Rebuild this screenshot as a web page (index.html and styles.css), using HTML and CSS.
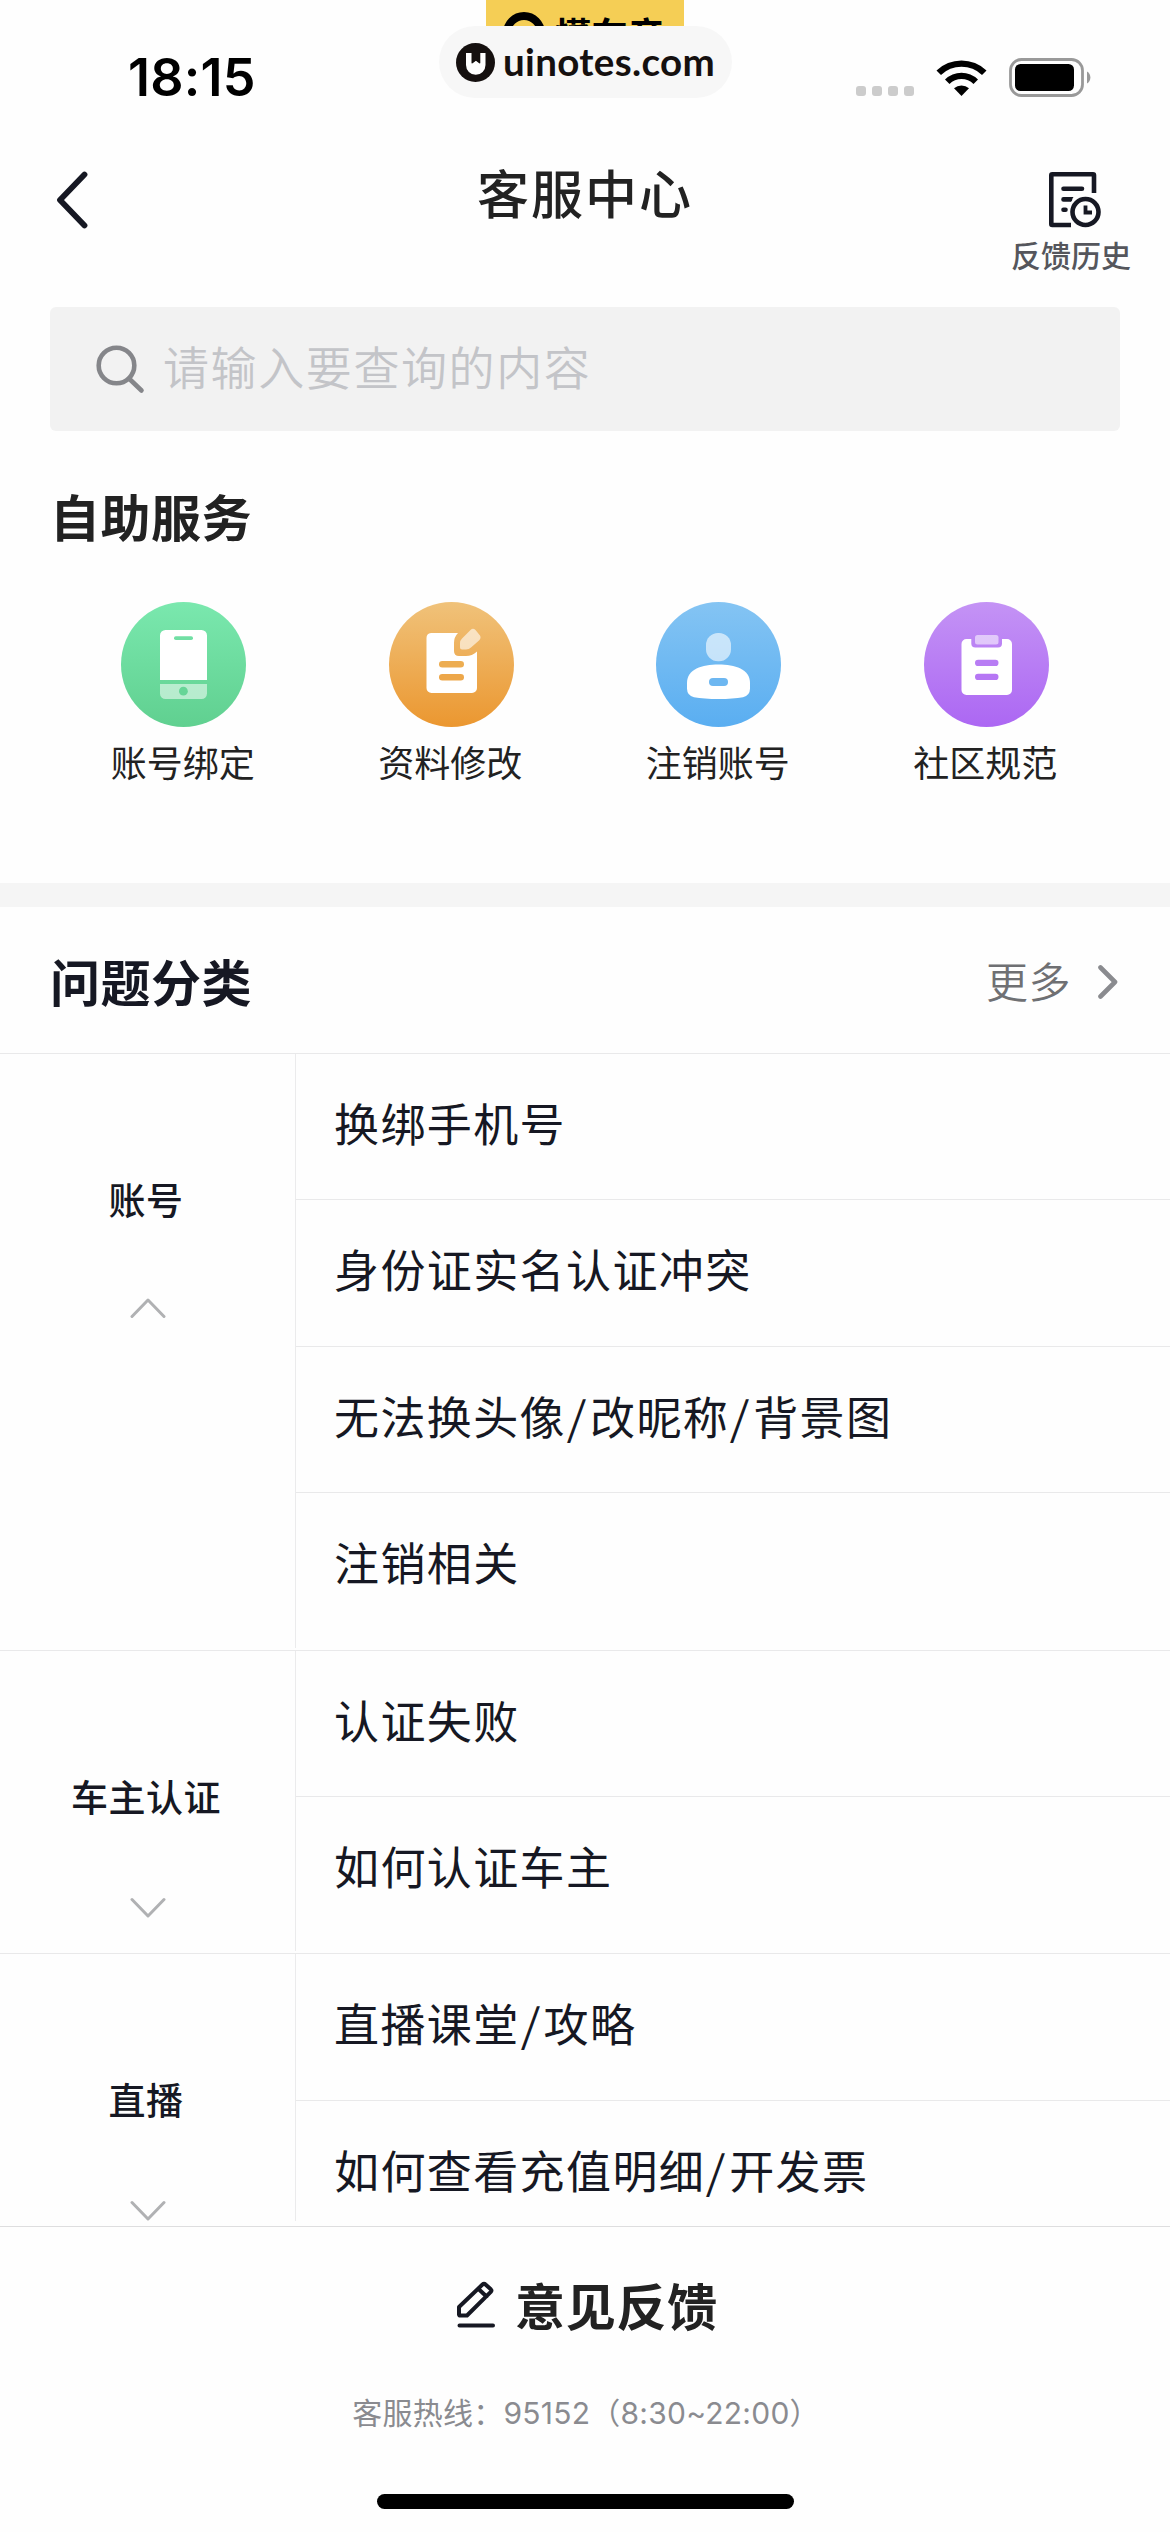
FILE: index.html
```html
<!DOCTYPE html>
<html lang="zh-CN">
<head>
<meta charset="utf-8">
<title>客服中心</title>
<link rel="stylesheet" href="styles.css">
</head>
<body>
<div class="screen">
  <div class="status">
    <span class="time">18:15</span>
    <div class="signals">
      <span class="dots"><i></i><i></i><i></i><i></i></span>
      <svg class="wifi" width="51" height="37" viewBox="0 0 51 37">
        <path d="M0.500 11.500A36 36 0 0 1 50.500 11.500L46 16A29.500 29.500 0 0 0 5 16Z"/>
        <path d="M9 20.500A23.500 23.500 0 0 1 42 20.500L37.500 25A17 17 0 0 0 13.500 25Z"/>
        <path d="M18 29.300A11.500 11.500 0 0 1 33 29.300L25.500 37Z"/>
      </svg>
      <svg class="battery" width="82" height="39" viewBox="0 0 82 39">
        <rect x="1.500" y="1.500" width="72" height="36" rx="11" fill="none" stroke="#999" stroke-width="2.800"/>
        <rect x="6" y="6" width="59" height="27" rx="5.500" fill="#000"/>
        <path d="M78 13.500a7 7 0 0 1 0 12z" fill="#999"/>
      </svg>
    </div>
    <div class="brand">
      <svg width="42" height="42" viewBox="0 0 42 42"><circle cx="21" cy="21" r="17" fill="none" stroke="#000" stroke-width="8"/></svg>
      <span>懂车帝</span>
    </div>
    <div class="pill">
      <svg width="39" height="39" viewBox="0 0 39 39">
        <circle cx="19.500" cy="19.500" r="19.500" fill="#15100f"/>
        <path d="M10 10h5.500v10c0 .5.500.7 1 .3l3.400-2.600 3.400 2.600c.5.400 1 .2 1-.3V10H29.500v12a9.700 9.700 0 0 1-19.500 0z" fill="#fff"/>
        <path d="M16.500 9h7v11l-3.500-3-3.500 3z" fill="#15100f"/>
      </svg>
      <span>uinotes.com</span>
    </div>
  </div>

  <header class="header">
    <svg class="back" width="34" height="60" viewBox="0 0 34 60"><path d="M30.500 4.500L6 30l24.500 25.500" fill="none" stroke="#161823" stroke-width="5.800" stroke-linecap="round" stroke-linejoin="round"/></svg>
    <h1 class="title">客服中心</h1>
    <div class="history">
      <svg width="54" height="56" viewBox="0 0 54 56" fill="none" stroke="#161823" stroke-width="4.600" stroke-linecap="round" stroke-linejoin="round">
        <path d="M45 21V3.300Q45 2.300 44 2.300H3.300Q2.300 2.300 2.300 3.300V52Q2.300 53 3.300 53H22" stroke-linecap="butt"/>
        <path d="M14.500 16.800H33M14.500 27.400H21M14.500 37.800H16.500"/>
        <path d="M21 25.100h3.500l-3 4.600H21z" fill="#161823" stroke="none"/>
        <circle cx="36.500" cy="40" r="13"/>
        <path d="M36.500 33.500V40.500H43" stroke-width="3.800" stroke-linecap="butt" stroke-linejoin="miter"/>
      </svg>
      <span>反馈历史</span>
    </div>
  </header>

  <div class="search">
    <svg width="50" height="49" viewBox="0 0 50 49" fill="none" stroke="#85868a" stroke-linecap="round"><circle cx="20.500" cy="20.500" r="17.800" stroke-width="4.600"/><path d="M33 33.500L45.500 45.500" stroke-width="4.600"/></svg>
    <span>请输入要查询的内容</span>
  </div>

  <section class="self">
    <h2>自助服务</h2>
    <div class="tiles">
      <div class="tile">
        <svg width="125" height="125" viewBox="0 0 125 125">
          <defs><linearGradient id="g1" x2="0" y2="1"><stop stop-color="#7ae8ae"/><stop offset="1" stop-color="#60d090"/></linearGradient></defs>
          <circle cx="62.500" cy="62.500" r="62.500" fill="url(#g1)"/>
          <path d="M39 78V33.500a5.500 5.500 0 0 1 5.500-5.500h36a5.500 5.500 0 0 1 5.500 5.500V78z" fill="#fff"/>
          <rect x="53" y="34.300" width="19" height="3.700" rx="1.800" fill="#71dfa4"/>
          <path d="M39 82H86V91.500a5.500 5.500 0 0 1-5.500 5.500h-36a5.500 5.500 0 0 1-5.500-5.500z" fill="#fff" opacity=".53"/>
          <circle cx="62.400" cy="89.200" r="4.400" fill="#66d597"/>
        </svg>
        <span>账号绑定</span>
      </div>
      <div class="tile">
        <svg width="125" height="125" viewBox="0 0 125 125">
          <defs><linearGradient id="g2" x2="0" y2="1"><stop stop-color="#f0c27a"/><stop offset="1" stop-color="#eb9730"/></linearGradient></defs>
          <circle cx="62.500" cy="62.500" r="62.500" fill="url(#g2)"/>
          <path d="M42 31H69Q65 35 65 41V49Q65 54 70 54H77Q83 54 88 49.500V86a5 5 0 0 1-5 5H42.500a5 5 0 0 1-5-5V36a5 5 0 0 1 4.500-5z" fill="#fff"/>
          <path d="M81.500 28Q84 25.500 86.500 28L91 33.500Q92.500 36 90 38.500L82 45.500Q80 47.500 77 47.500H73Q71 47.500 71 45.500V41Q71 38.500 73 36.500z" fill="#fff" opacity=".6"/>
          <rect x="50" y="59" width="25" height="6.600" rx="3.300" fill="#edad51"/>
          <rect x="50" y="72" width="25" height="6.600" rx="3.300" fill="#eda74a"/>
        </svg>
        <span>资料修改</span>
      </div>
      <div class="tile">
        <svg width="125" height="125" viewBox="0 0 125 125">
          <defs><linearGradient id="g3" x2="0" y2="1"><stop stop-color="#84c4f3"/><stop offset="1" stop-color="#5aaef1"/></linearGradient></defs>
          <circle cx="62.500" cy="62.500" r="62.500" fill="url(#g3)"/>
          <rect x="50" y="31" width="25" height="28.300" rx="12" fill="#fff" opacity=".6"/>
          <path d="M62.500 62.500C79 62.500 94 67 94 81V86.500Q94 93.500 87 95.200Q77 97 62.500 97T38 95.200Q31 93.500 31 86.500V81C31 67 46 62.500 62.500 62.500z" fill="#fff"/>
          <rect x="53" y="76" width="19" height="8" rx="4" fill="#6db7f1"/>
        </svg>
        <span>注销账号</span>
      </div>
      <div class="tile">
        <svg width="125" height="125" viewBox="0 0 125 125">
          <defs><linearGradient id="g4" x2="0" y2="1"><stop stop-color="#c493f5"/><stop offset="1" stop-color="#ac67f3"/></linearGradient></defs>
          <circle cx="62.500" cy="62.500" r="62.500" fill="url(#g4)"/>
          <path d="M42.500 37H47.300V41.500a4 4 0 0 0 4 4H74a4 4 0 0 0 4-4V37H83a5 5 0 0 1 5 5V88a5 5 0 0 1-5 5H42.500a5 5 0 0 1-5-5V42a5 5 0 0 1 5-5z" fill="#fff"/>
          <rect x="51" y="33" width="23.500" height="9.500" rx="2.500" fill="#fff" opacity=".55"/>
          <rect x="51" y="57.700" width="23.500" height="6.300" rx="3.100" fill="#b87df4"/>
          <rect x="51" y="71.700" width="23.500" height="6.300" rx="3.100" fill="#b677f4"/>
        </svg>
        <span>社区规范</span>
      </div>
    </div>
  </section>

  <div class="band"></div>

  <section class="faq">
    <div class="faq-head">
      <h2>问题分类</h2>
      <div class="more"><span>更多</span><svg width="20" height="34" viewBox="0 0 20 34"><path d="M2.500 2.500L17 17L2.500 31.500" fill="none" stroke="#8a8b8f" stroke-width="4.600" stroke-linecap="round" stroke-linejoin="round"/></svg></div>
    </div>

    <div class="group">
      <div class="cat"><span>账号</span><svg class="up" width="36" height="22" viewBox="0 0 36 22"><path d="M2 19.500L18 3L34 19.500"/></svg></div>
      <ul>
        <li>换绑手机号</li>
        <li>身份证实名认证冲突</li>
        <li>无法换头像<b>/</b>改昵称<b>/</b>背景图</li>
        <li>注销相关</li>
      </ul>
    </div>
    <div class="group">
      <div class="cat"><span>车主认证</span><svg width="36" height="22" viewBox="0 0 36 22"><path d="M2 2.500L18 19L34 2.500"/></svg></div>
      <ul>
        <li>认证失败</li>
        <li>如何认证车主</li>
      </ul>
    </div>
    <div class="group last">
      <div class="cat"><span>直播</span><svg width="36" height="22" viewBox="0 0 36 22"><path d="M2 2.500L18 19L34 2.500"/></svg></div>
      <ul>
        <li>直播课堂<b>/</b>攻略</li>
        <li>如何查看充值明细<b>/</b>开发票</li>
      </ul>
    </div>
  </section>

  <footer class="footer">
    <div class="feedback">
      <svg width="38" height="47" viewBox="0 0 38 47" fill="none" stroke="#161823" stroke-width="4" stroke-linecap="round" stroke-linejoin="round"><path d="M2 33.500V26L25.500 3.500Q27 2 28.500 3.500L33.800 8.300Q35 9.500 33.800 10.800L10 34.500H2.500zM21.500 8L29.500 15.500M2.500 44.500H36"/></svg>
      <span>意见反馈</span>
    </div>
    <p class="hotline">客服热线：<span>95152</span>（<span>8:30~22:00</span>）</p>
    <div class="home"></div>
  </footer>
</div>
</body>
</html>
```
FILE: styles.css
```css
* { box-sizing: border-box; margin: 0; padding: 0; }

body {
  width: 1170px;
  background: #fefefe;
  color: #161823;
  font-family: "Noto Sans CJK SC", sans-serif;
}

svg { display: block; flex: none; }

.screen {
  width: 1170px;
  height: 2532px;
  display: flex;
  flex-direction: column;
  overflow: hidden;
}

/* Status bar */
.status {
  position: relative;
  height: 140px;
  flex: none;
  display: flex;
  justify-content: space-between;
  padding: 0 79px 0 128px;
}
.time {
  margin-top: 48px;
  font: 600 52px/60px Inter, sans-serif;
  color: #000;
  letter-spacing: 0.200px;
}
.signals { display: flex; height: 39px; margin-top: 58px; align-items: flex-start; }
.dots { display: flex; gap: 6px; margin: 28px 22px 0 0; }
.dots i { width: 10px; height: 10px; border-radius: 3px; background: #ccc; }
.wifi { margin: 1px 22px 0 0; }

.brand {
  position: absolute;
  left: 486px;
  top: 0;
  width: 198px;
  height: 40px;
  overflow: hidden;
  display: flex;
  gap: 9px;
  padding: 12px 0 0 17px;
  background: #f5ce55;
}
.brand span {
  font-size: 37px;
  line-height: 44px;
  font-weight: 700;
  color: #000;
}
.pill {
  position: absolute;
  left: 439px;
  top: 26px;
  width: 293px;
  height: 72px;
  border-radius: 36px;
  background: #f7f7f7;
  display: flex;
  align-items: center;
  gap: 8px;
  padding-left: 17px;
}
.pill span {
  margin-top: -2px;
  font: 700 38.500px/44px Lato, sans-serif;
  letter-spacing: 0.350px;
  color: #15100f;
}

/* Header */
.header {
  height: 167px;
  flex: none;
  display: grid;
  grid-template-columns: 200px 1fr 200px;
}
.back { margin: 29.500px 0 0 54px; }
.title {
  justify-self: center;
  margin-top: 22px;
  font-size: 52px;
  line-height: 60px;
  font-weight: 500;
  letter-spacing: 2px;
  color: #222;
}
.history {
  justify-self: end;
  width: 122px;
  margin: 32px 38px 0 0;
  display: flex;
  flex-direction: column;
  align-items: center;
}
.history svg { margin-left: 9px; }
.history span {
  margin-top: 8px;
  font-size: 30px;
  line-height: 36px;
  font-weight: 500;
  color: #55565c;
}

/* Search */
.search {
  height: 124px;
  flex: none;
  margin: 0 50px;
  padding-left: 46px;
  border-radius: 6px;
  background: #f2f2f2;
  display: flex;
  align-items: center;
  gap: 17px;
}
.search span {
  margin-top: -8px;
  font-size: 46px;
  line-height: 60px;
  font-weight: 350;
  letter-spacing: 1.600px;
  color: #c3c4c8;
}

h2 { font-size: 50px; line-height: 60px; font-weight: 700; letter-spacing: 0.500px; }

/* Self service */
.self { height: 452px; flex: none; padding: 54px 50px 0; }
.self h2 { color: #222; }
.tiles { display: grid; grid-template-columns: repeat(4, 1fr); margin-top: 57px; }
.tile { display: flex; flex-direction: column; align-items: center; }
.tile span { margin: 14px 2px 0 0; font-size: 36px; line-height: 40px; color: #222; }

.band { height: 24px; flex: none; background: #f5f5f5; }

/* Questions */
.faq { height: 1319px; flex: none; overflow: hidden; }
.faq-head {
  height: 146px;
  padding: 0 52px 0 50px;
  display: flex;
  justify-content: space-between;
}
.faq-head h2 { margin-top: 43px; }
.more { display: flex; align-items: flex-start; gap: 27px; }
.more span { margin-top: 43px; font-size: 42px; line-height: 60px; font-weight: 350; letter-spacing: 0.500px; color: #6f7073; }
.more svg { margin-top: 57.500px; }

.group {
  display: flex;
  border-top: 1px solid #e9e9ea;
  padding-bottom: 2px;
}
.cat {
  width: 296px;
  border-right: 1px solid #ebebec;
  display: flex;
  flex-direction: column;
  align-items: center;
}
.cat span { margin: 123px 3px 0 0; font-size: 37px; line-height: 44px; font-weight: 500; letter-spacing: 0.500px; }
.cat svg { margin-top: 79px; fill: none; stroke: #b0b1b3; stroke-width: 3; stroke-linecap: round; stroke-linejoin: round; }
.cat .up { margin-top: 76px; }
.group ul { flex: 1; list-style: none; padding-bottom: 8px; }
.group li {
  height: 146.400px;
  padding: 37px 0 0 38px;
  border-bottom: 1px solid #e9e9ea;
  font-size: 45px;
  line-height: 64px;
  letter-spacing: 1.400px;
  white-space: nowrap;
}
.group li:last-child { border-bottom: 0; }
.group li b { display: inline-block; width: 24px; font-weight: 400; font-size: 45px; line-height: 1; letter-spacing: 0; text-indent: 2px; transform: skewX(-3deg); }
.last { height: 270px; overflow: hidden; }

/* Footer */
.footer {
  flex: 1;
  border-top: 1px solid #dededf;
  display: flex;
  flex-direction: column;
  align-items: center;
}
.feedback { display: flex; align-items: flex-start; gap: 20px; margin: 47px 0 0 5px; color: #222; }
.feedback svg { margin-top: 7px; }
.feedback span { font-size: 50px; line-height: 60px; font-weight: 700; letter-spacing: 0.800px; }
.hotline {
  margin-top: 57px;
  margin-left: 2px;
  font-size: 30px;
  line-height: 40px;
  letter-spacing: 0.250px;
  color: #8a8b90;
  white-space: nowrap;
}
.hotline span { font-family: Inter, sans-serif; }
.home { width: 417px; height: 15px; margin: 61px 0 0 1px; border-radius: 8px; background: #000; }
```
